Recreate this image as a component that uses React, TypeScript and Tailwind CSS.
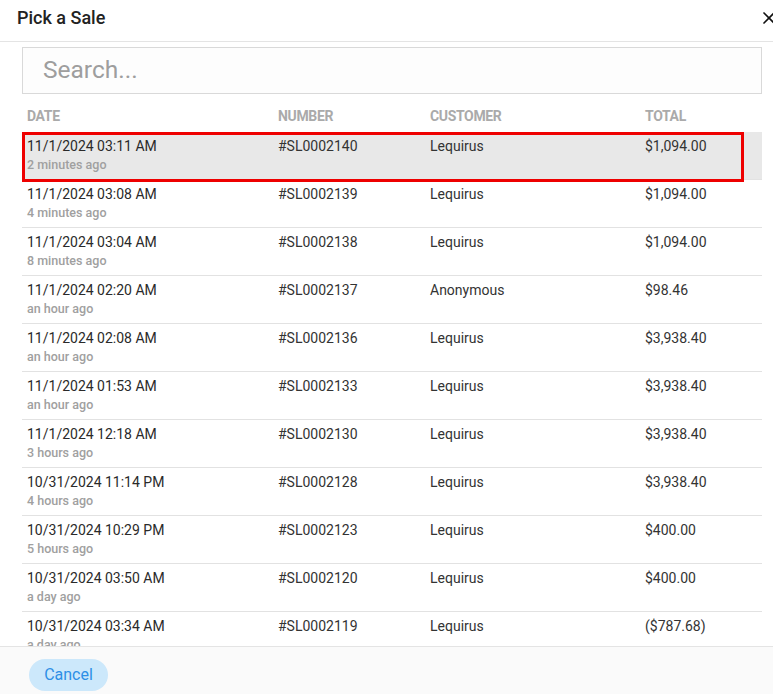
import { X } from 'lucide-react';

interface Sale {
  date: string;
  ago: string;
  number: string;
  customer: string;
  total: string;
}

const sales: Sale[] = [
  { date: '11/1/2024 03:11 AM', ago: '2 minutes ago', number: '#SL0002140', customer: 'Lequirus', total: '$1,094.00' },
  { date: '11/1/2024 03:08 AM', ago: '4 minutes ago', number: '#SL0002139', customer: 'Lequirus', total: '$1,094.00' },
  { date: '11/1/2024 03:04 AM', ago: '8 minutes ago', number: '#SL0002138', customer: 'Lequirus', total: '$1,094.00' },
  { date: '11/1/2024 02:20 AM', ago: 'an hour ago', number: '#SL0002137', customer: 'Anonymous', total: '$98.46' },
  { date: '11/1/2024 02:08 AM', ago: 'an hour ago', number: '#SL0002136', customer: 'Lequirus', total: '$3,938.40' },
  { date: '11/1/2024 01:53 AM', ago: 'an hour ago', number: '#SL0002133', customer: 'Lequirus', total: '$3,938.40' },
  { date: '11/1/2024 12:18 AM', ago: '3 hours ago', number: '#SL0002130', customer: 'Lequirus', total: '$3,938.40' },
  { date: '10/31/2024 11:14 PM', ago: '4 hours ago', number: '#SL0002128', customer: 'Lequirus', total: '$3,938.40' },
  { date: '10/31/2024 10:29 PM', ago: '5 hours ago', number: '#SL0002123', customer: 'Lequirus', total: '$400.00' },
  { date: '10/31/2024 03:50 AM', ago: 'a day ago', number: '#SL0002120', customer: 'Lequirus', total: '$400.00' },
  { date: '10/31/2024 03:34 AM', ago: 'a day ago', number: '#SL0002119', customer: 'Lequirus', total: '($787.68)' },
];

export default function App() {
  return (
    <div
      className="w-[773px] h-[694px] bg-white flex flex-col overflow-hidden text-[#333]"
      style={{ fontFamily: 'Roboto, "Liberation Sans", sans-serif' }}
    >
      {/* header */}
      <div className="h-[42px] shrink-0 flex items-center justify-between pl-[17px] border-b border-[#e4e4e4]">
        <div className="text-[18px] font-medium text-[#222] leading-none -mt-[5px]">Pick a Sale</div>
        <X className="w-[20px] h-[20px] text-[#111] -mr-[6px] -mt-[6px]" strokeWidth={2} />
      </div>

      {/* body */}
      <div className="flex-1 overflow-hidden pl-[22px] pr-[11px] pt-[5px]">
        <div className="h-[47px] border border-[#d9d9d9] bg-[#fdfdfd] flex items-center pl-[20px]">
          <span className="text-[24.5px] text-[#9e9e9e] font-normal">Search...</span>
        </div>

        <div className="grid grid-cols-[251px_152px_215px_1fr] h-[38px] items-end pb-[5px] pl-[5px] text-[14px] font-bold text-[#aaaaaa] tracking-tight">
          <div>DATE</div>
          <div>NUMBER</div>
          <div>CUSTOMER</div>
          <div>TOTAL</div>
        </div>

        <div className="relative">
          {sales.map((s, i) => (
            <div
              key={s.number}
              className={`grid grid-cols-[251px_152px_215px_1fr] h-[48px] pl-[5px] pt-[5px] border-b border-[#e2e2e2] ${
                i === 0 ? 'bg-[#e8e8e8]' : ''
              }`}
            >
              <div>
                <div className="text-[14px] leading-[18px] text-[#2a2a2a]">{s.date}</div>
                <div className="text-[12.5px] font-medium text-[#a0a0a0] leading-[20px]">{s.ago}</div>
              </div>
              <div className="text-[14px] leading-[18px]">{s.number}</div>
              <div className="text-[14px] leading-[18px]">{s.customer}</div>
              <div className="text-[14px] leading-[18px]">{s.total}</div>
            </div>
          ))}
          {/* highlight frame over the first row */}
          <div className="absolute left-0 top-0 w-[722px] h-[50px] border-[3px] border-[#ee0000] pointer-events-none" />
        </div>
      </div>

      {/* footer */}
      <div className="h-[48px] shrink-0 bg-[#fafafa] border-t border-[#e4e4e4] flex items-start pt-[12px] pl-[29px]">
        <button className="w-[79px] h-[32px] rounded-full bg-[#cce8fb] text-[#2d8fe6] text-[16px]">
          Cancel
        </button>
      </div>
    </div>
  );
}
